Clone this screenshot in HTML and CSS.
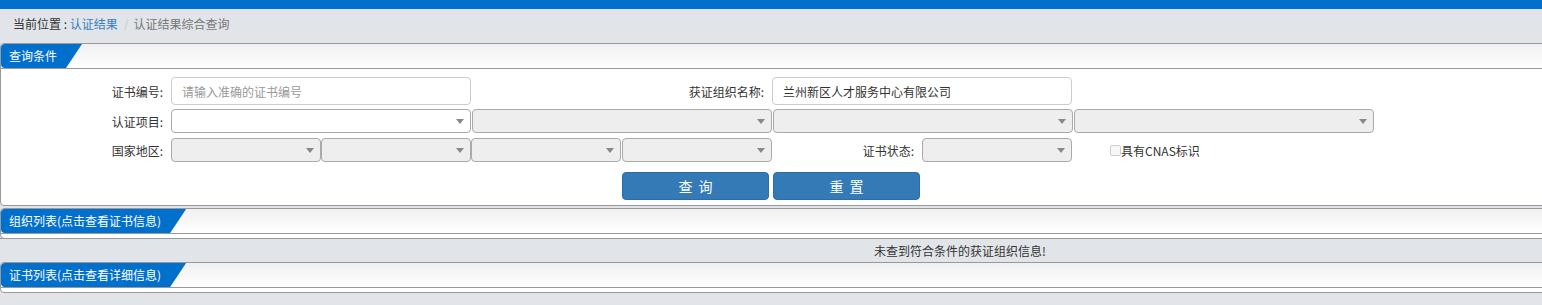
FILE: index.html
```html
<!DOCTYPE html>
<html lang="zh-CN">
<head>
    <meta charset="UTF-8">
    <title>认证结果综合查询</title>
    <link rel="stylesheet" href="styles.css">
</head>
<body>
    <div class="topbar"></div>
    <div class="crumbs">
        <span>当前位置 : </span><a href="#">认证结果</a><span class="sep">/</span><span class="cur">认证结果综合查询</span>
    </div>

    <div class="main">
        <div class="panel">
            <div class="panel-head"><span class="tab">查询条件</span></div>
            <div class="panel-body">
                <div class="row row-text">
                    <label class="lbl">证书编号:</label>
                    <input type="text" class="field w300" placeholder="请输入准确的证书编号">
                    <label class="lbl lbl-wide">获证组织名称:</label>
                    <input type="text" class="field w300" value="兰州新区人才服务中心有限公司">
                </div>
                <div class="row">
                    <label class="lbl">认证项目:</label>
                    <span class="select w300 on"></span>
                    <span class="select w300"></span>
                    <span class="select w300"></span>
                    <span class="select w300"></span>
                </div>
                <div class="row">
                    <label class="lbl">国家地区:</label>
                    <span class="select w150"></span>
                    <span class="select w150"></span>
                    <span class="select w150"></span>
                    <span class="select w150 gap"></span>
                    <label class="lbl lbl-mid">证书状态:</label>
                    <span class="select w150"></span>
                    <label class="check"><span class="box"></span>具有CNAS标识</label>
                </div>
                <div class="row row-btn">
                    <button type="button" class="btn">查询</button>
                    <button type="button" class="btn">重置</button>
                </div>
            </div>
        </div>

        <div class="panel panel-list">
            <div class="panel-head"><span class="tab">组织列表(点击查看证书信息)</span></div>
            <div class="panel-body"></div>
        </div>
        <div class="empty">未查到符合条件的获证组织信息!</div>

        <div class="panel panel-list">
            <div class="panel-head"><span class="tab">证书列表(点击查看详细信息)</span></div>
            <div class="panel-body"></div>
        </div>
    </div>
</body>
</html>
```

FILE: styles.css
```css
html, body {
    margin: 0;
    overflow: hidden;
}
body {
    background-color: #e1e5e9;
    font-family: "Noto Sans CJK SC", "Liberation Sans", sans-serif;
    font-size: 12px;
    color: #333333;
}
.topbar {
    height: 9px;
    background-color: #006fcd;
}
.crumbs {
    height: 34px;
    line-height: 29px;
    padding-left: 13px;
    color: #333333;
}
.crumbs a {
    color: #3a7ec2;
    text-decoration: none;
}
.crumbs .sep {
    color: #c8c8c8;
    padding: 0 5px 0 6px;
}
.crumbs .cur {
    color: #777777;
}
.main {
    width: 1920px;
}
.panel {
    background-color: #ffffff;
    border: 1px solid #999999;
    border-radius: 4px;
    margin-bottom: 2px;
}
.panel-head {
    height: 24px;
    border-bottom: 1px solid #999999;
    background: linear-gradient(#f0f0f0, #ffffff);
    border-radius: 4px 0 0 0;
}
.tab {
    display: inline-block;
    height: 24px;
    line-height: 23px;
    padding: 0 25px 0 8px;
    color: #ffffff;
    background-color: #0070cc;
    border-radius: 4px 0 0 4px;
    clip-path: polygon(0 0, 100% 0, calc(100% - 16px) 100%, 0 100%);
}
.panel-body {
    padding: 8px 0 5px;
}
.panel-list {
    margin-bottom: 0;
}
.panel-list .panel-body {
    padding: 0;
    height: 4px;
}
.row {
    display: flex;
    align-items: center;
    height: 24px;
    margin-bottom: 5px;
}
.row-text {
    height: 28px;
    margin-bottom: 4px;
}
.lbl {
    width: 162px;
    padding-right: 8px;
    text-align: right;
    flex-shrink: 0;
}
.lbl-wide {
    width: 293px;
}
.lbl-mid {
    width: 142px;
}
.field {
    box-sizing: border-box;
    height: 28px;
    border: 1px solid #cccccc;
    border-radius: 4px;
    padding: 0 10px;
    font: inherit;
    color: #333333;
    outline: none;
}
.field::placeholder {
    color: #999999;
}
.w300 {
    width: 300px;
}
.w150 {
    width: 150px;
}
.select {
    box-sizing: border-box;
    position: relative;
    height: 24px;
    margin-right: 1px;
    border: 1px solid #aaaaaa;
    border-radius: 4px;
    background-color: #eeeeee;
    flex-shrink: 0;
}
.select.w150 {
    margin-right: 0;
}
.select.gap {
    margin-left: 1px;
}
.select.on {
    background-color: #ffffff;
}
.select::after {
    content: "";
    position: absolute;
    right: 6px;
    top: 9px;
    border-left: 4px solid transparent;
    border-right: 4px solid transparent;
    border-top: 5px solid #888888;
}
.check {
    display: flex;
    align-items: center;
    margin-left: 38px;
}
.check .box {
    box-sizing: border-box;
    width: 11px;
    height: 11px;
    border: 1px solid #cfcfcf;
    border-radius: 2px;
    background-color: #f7f7f7;
}
.row-btn {
    height: 28px;
    margin: 10px 0 0;
    padding-left: 621px;
}
.btn {
    width: 147px;
    height: 28px;
    margin-right: 4px;
    border: 1px solid #2e6da4;
    border-radius: 4px;
    background-color: #337ab7;
    color: #ffffff;
    font: inherit;
    font-size: 14px;
    letter-spacing: 6px;
    text-indent: 6px;
    cursor: pointer;
}
.empty {
    height: 23px;
    line-height: 23px;
    text-align: center;
    border-top: 1px solid #999999;
    margin-top: -1px;
}
```
